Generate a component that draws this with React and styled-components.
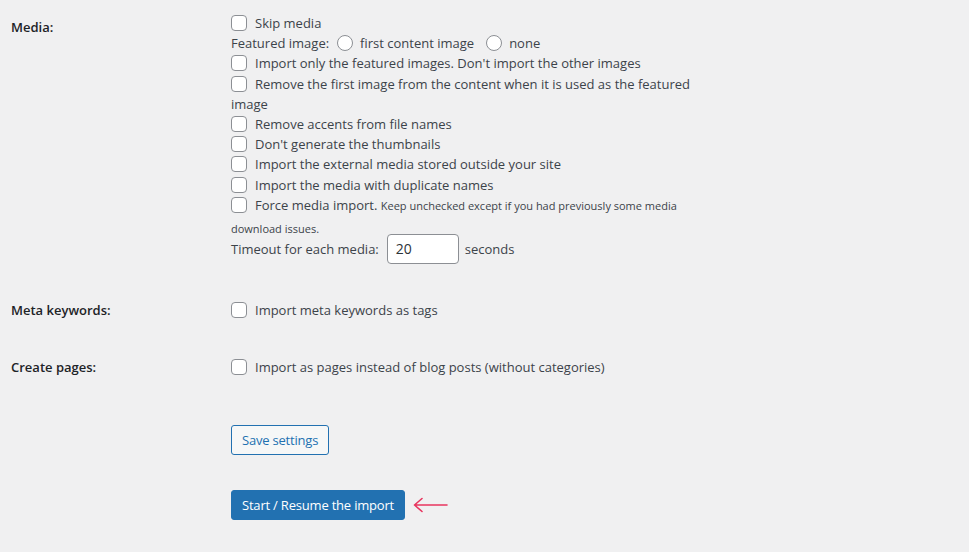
import React from 'react';
import styled, { createGlobalStyle } from 'styled-components';

const GlobalStyle = createGlobalStyle`
    html, body {
        margin: 0;
        padding: 0;
        background: #f0f0f1;
    }
    body {
        font-family: "Open Sans", "Noto Sans", sans-serif;
        font-size: 13px;
        color: #3c434a;
    }
`

const Page = styled.div`
    width: 969px;
    height: 552px;
    padding-left: 11px;
    box-sizing: border-box;
    overflow: hidden;
`

const Row = styled.div`
    display: grid;
    grid-template-columns: 220px 1fr;
    padding-top: ${({ top }) => top}px;
`

const Label = styled.div`
    font-weight: 600;
    color: #1d2327;
    font-size: 13px;
    line-height: 20px;
    padding-top: ${({ offset }) => offset || 0}px;
`

const Options = styled.div`
    width: 470px;
    line-height: 20.2px;
`

const Option = styled.label`
    display: block;
    line-height: ${({ tall }) => (tall ? '22px' : '20.2px')};
    margin-top: ${({ tall }) => (tall ? '-1px' : '0')};
`

const Box = styled.span`
    display: inline-block;
    width: 16px;
    height: 16px;
    box-sizing: border-box;
    border: 1px solid #8c8f94;
    border-radius: ${({ round }) => (round ? '50%' : '4px')};
    background: #fff;
    vertical-align: -3px;
    margin-right: 8px;
`

const RadioBox = styled(Box)`
    margin-left: ${({ gap }) => gap}px;
    margin-right: 7px;
`

const Hint = styled.span`
    font-size: 11px;
`

const TimeoutLine = styled.div`
    display: flex;
    align-items: center;
    height: 30px;
    margin-top: -6px;
`

const NumberInput = styled.div`
    width: 72px;
    height: 30px;
    box-sizing: border-box;
    margin: 0 6px 0 8px;
    padding: 0 8px;
    border: 1px solid #8c8f94;
    border-radius: 4px;
    background: #fff;
    color: #2c3338;
    font-size: 14px;
    line-height: 28px;
`

const Button = styled.button`
    font-family: inherit;
    font-size: 13px;
    letter-spacing: -0.2px;
    height: 30px;
    padding: 0 10px;
    border-radius: 3px;
    border: 1px solid #2271b1;
    cursor: pointer;
    background: ${({ primary }) => (primary ? '#2271b1' : '#f6f7f7')};
    color: ${({ primary }) => (primary ? '#fff' : '#2271b1')};
`

const ButtonRow = styled.div`
    display: flex;
    align-items: center;
    gap: 8px;
    margin-left: 220px;
    margin-top: ${({ top }) => top}px;
`

const Checkbox = ({ children, tall }) => (
    <Option tall={tall}>
        <Box />
        {children}
    </Option>
)

const Arrow = () => (
    <svg width="36" height="16" viewBox="0 0 36 16">
        <path d="M1.5 8 H34 M1.5 8 L9 1.5 M1.5 8 L9 14.5" fill="none" stroke="#e8355f" strokeWidth="1.6" strokeLinecap="round" />
    </svg>
)

const App = () => {
    return (
        <Page>
            <GlobalStyle />
            <Row top={13}>
                <Label offset={4}>Media:</Label>
                <Options>
                    <Checkbox>Skip media</Checkbox>
                    <Option>
                        Featured image:
                        <RadioBox round gap={8} />first content image
                        <RadioBox round gap={12} />none
                    </Option>
                    <Checkbox>Import only the featured images. Don't import the other images</Checkbox>
                    <Checkbox>Remove the first image from the content when it is used as the featured image</Checkbox>
                    <Checkbox>Remove accents from file names</Checkbox>
                    <Checkbox>Don't generate the thumbnails</Checkbox>
                    <Checkbox>Import the external media stored outside your site</Checkbox>
                    <Checkbox>Import the media with duplicate names</Checkbox>
                    <Checkbox tall>
                        Force media import. <Hint>Keep unchecked except if you had previously some media download issues.</Hint>
                    </Checkbox>
                    <TimeoutLine>
                        Timeout for each media:
                        <NumberInput>20</NumberInput>
                        seconds
                    </TimeoutLine>
                </Options>
            </Row>
            <Row top={36}>
                <Label>Meta keywords:</Label>
                <Options>
                    <Checkbox>Import meta keywords as tags</Checkbox>
                </Options>
            </Row>
            <Row top={37}>
                <Label>Create pages:</Label>
                <Options>
                    <Checkbox>Import as pages instead of blog posts (without categories)</Checkbox>
                </Options>
            </Row>
            <ButtonRow top={48}>
                <Button>Save settings</Button>
            </ButtonRow>
            <ButtonRow top={35}>
                <Button primary>Start / Resume the import</Button>
                <Arrow />
            </ButtonRow>
        </Page>
    )
}

export default App;
